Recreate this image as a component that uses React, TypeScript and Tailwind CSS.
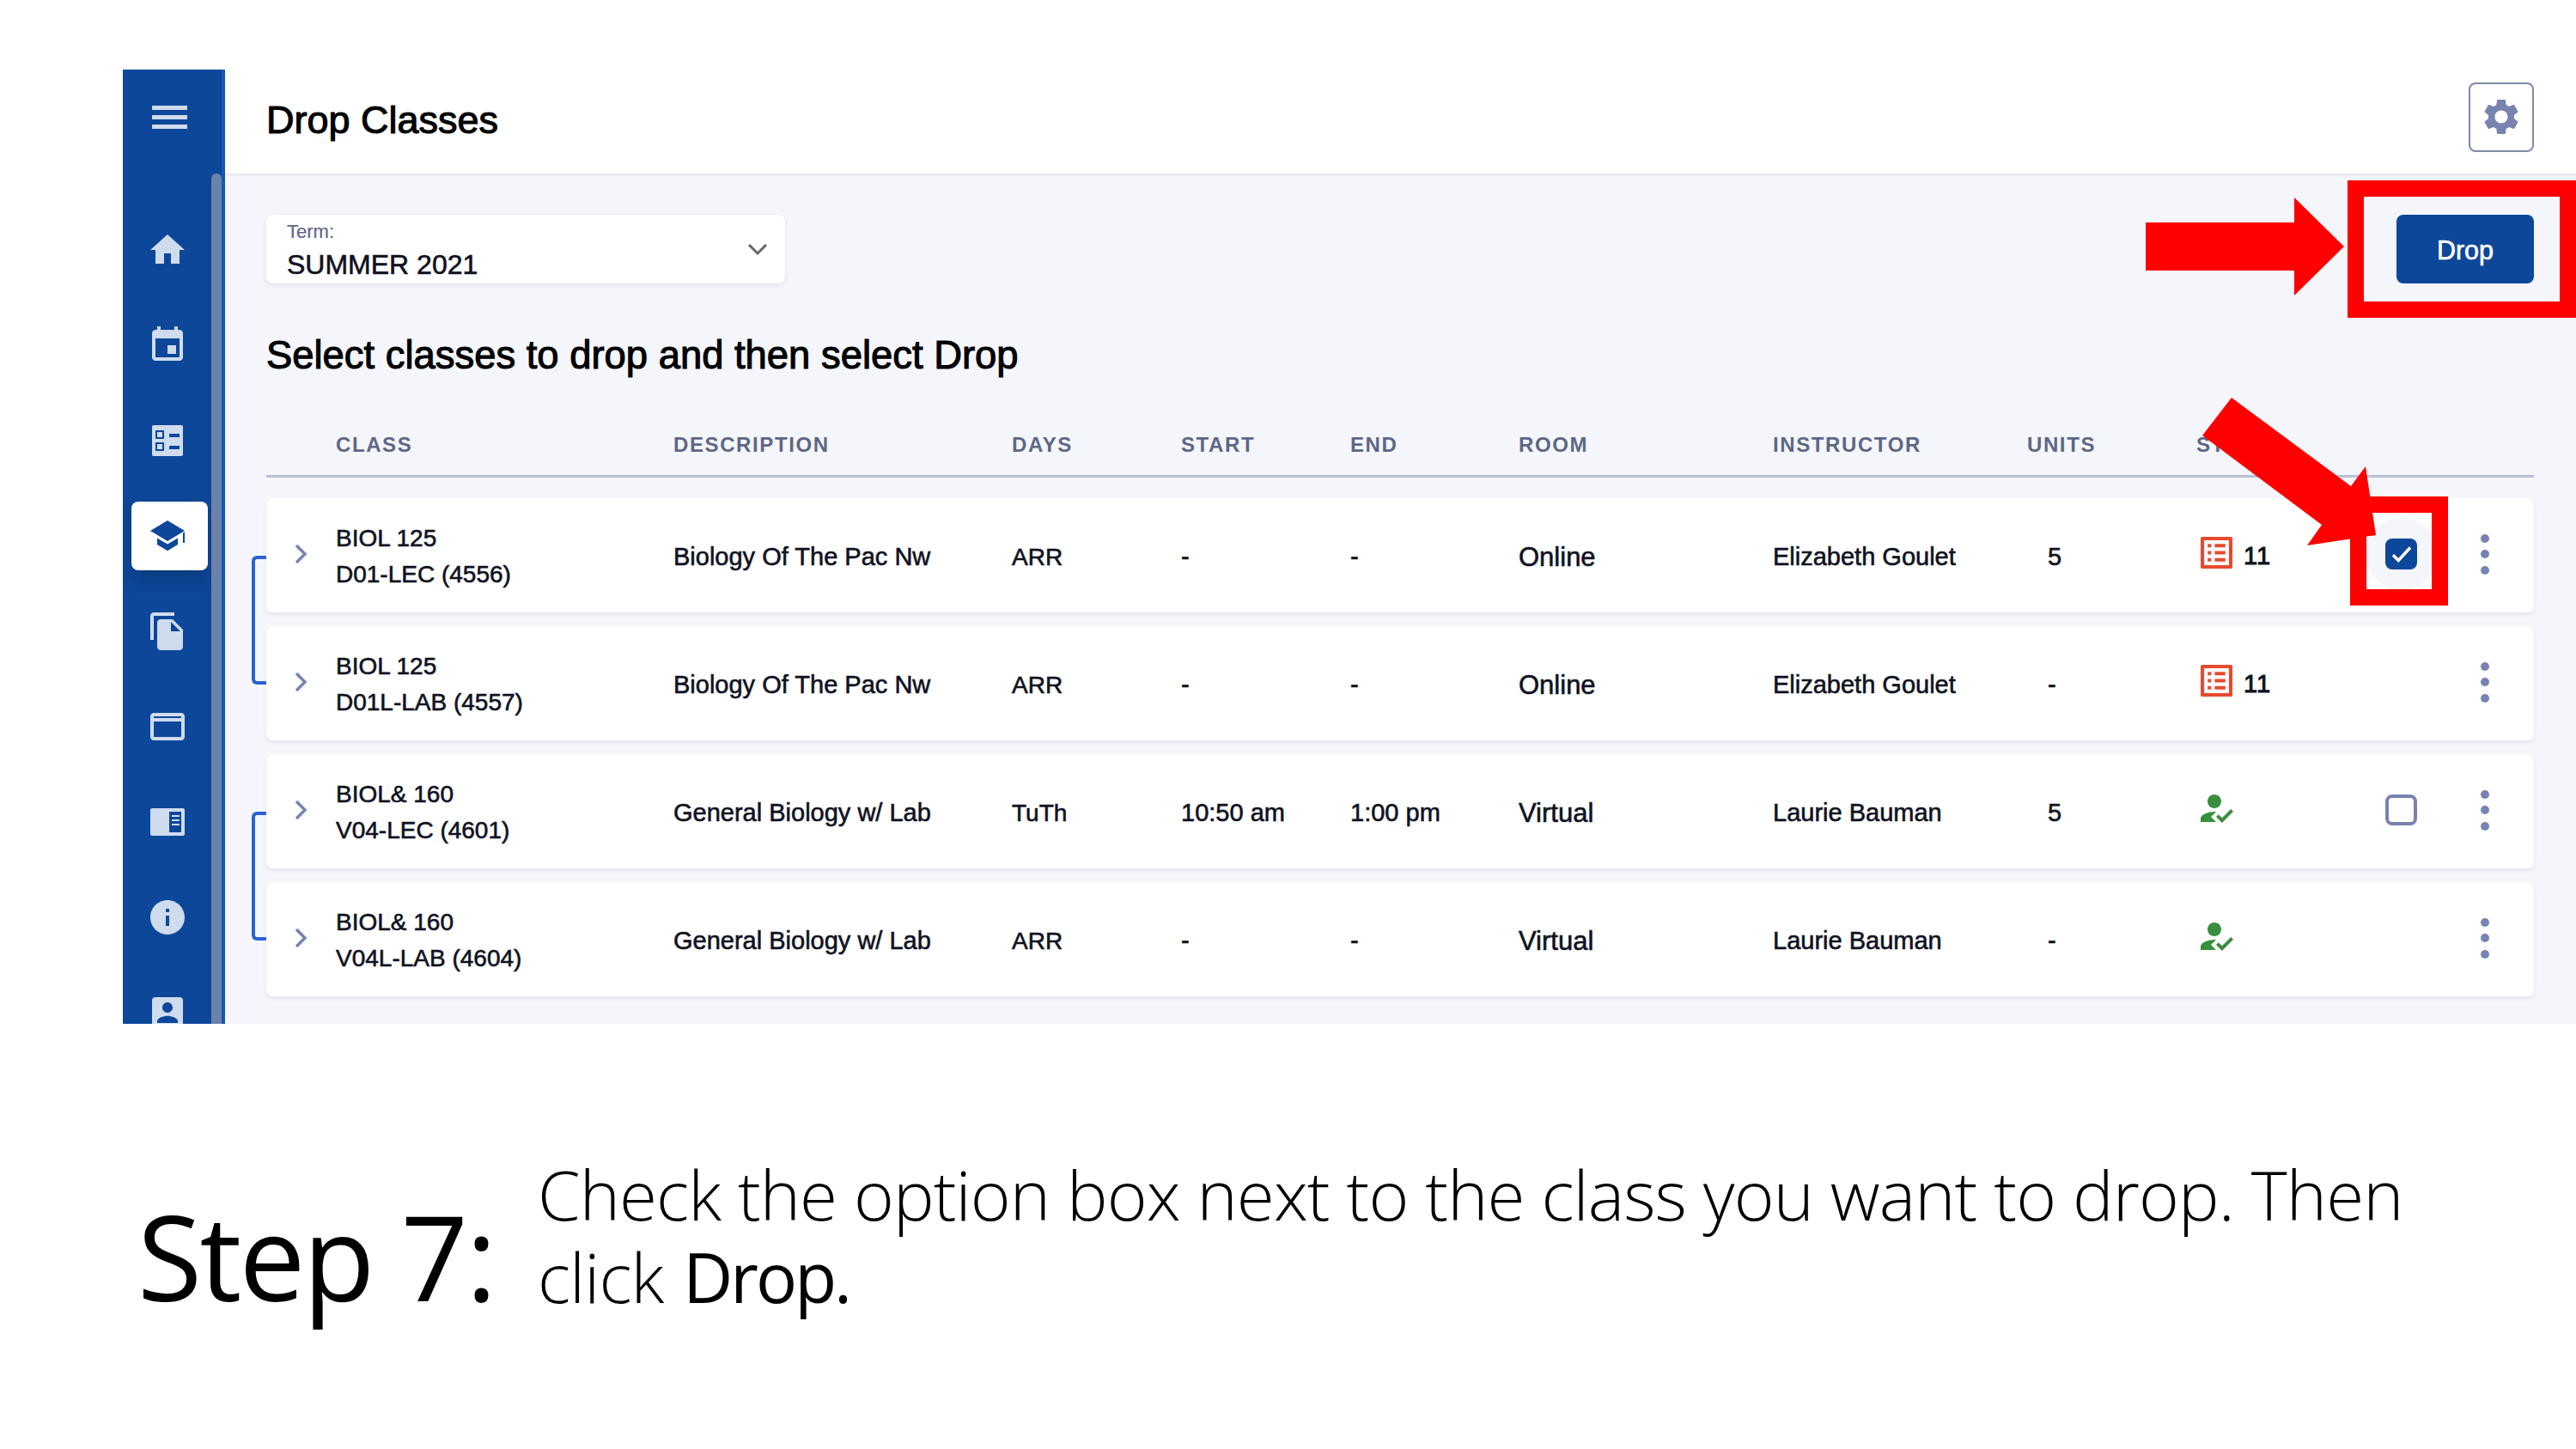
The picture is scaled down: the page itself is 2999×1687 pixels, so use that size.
import type { ReactNode } from 'react'

const NAV_ICONS: { key: string; active?: boolean; icon: ReactNode }[] = [
  { key: 'home', icon: <path d="M10 20v-6h4v6h5v-8h3L12 3 2 12h3v8z" /> },
  {
    key: 'calendar',
    icon: <path d="M17 12h-5v5h5v-5zM16 1v2H8V1H6v2H5c-1.11 0-1.99.9-1.99 2L3 19c0 1.1.89 2 2 2h14c1.1 0 2-.9 2-2V5c0-1.1-.9-2-2-2h-1V1h-2zm3 18H5V8h14v11z" />,
  },
  {
    key: 'checklist',
    icon: (
      <path
        fillRule="evenodd"
        d="M4 3h16a1 1 0 0 1 1 1v16a1 1 0 0 1-1 1H4a1 1 0 0 1-1-1V4a1 1 0 0 1 1-1zm1 3v5h5V6H5zm1 1h3v3H6V7zm7 1v2h6V8h-6zM5 13v5h5v-5H5zm1 1h3v3H6v-3zm7 1v2h6v-2h-6z"
      />
    ),
  },
  {
    key: 'classes',
    active: true,
    icon: <path d="M12 3 2 9l10 6 10-6zM6 13.200V17l6 3.600 6-3.600v-3.800l-6 3.600zM21 10.300V16h1v-6.300z" />,
  },
  {
    key: 'files',
    icon: <path d="M16 1H4c-1.1 0-2 .9-2 2v14h2V3h12V1zm-1 4 6 6v10c0 1.1-.9 2-2 2H7.99C6.89 23 6 22.1 6 21l.01-14c0-1.1.89-2 1.99-2h7zm-1 7h5.5L14 6.5V12z" />,
  },
  {
    key: 'card',
    icon: <path d="M20 4H4c-1.11 0-1.99.89-1.99 2L2 18c0 1.11.89 2 2 2h16c1.11 0 2-.89 2-2V6c0-1.11-.89-2-2-2zm0 14H4v-9h16v9zm0-11H4V6h16v1z" />,
  },
  {
    key: 'book',
    icon: (
      <path
        fillRule="evenodd"
        d="M2 5a1 1 0 0 1 1-1h18a1 1 0 0 1 1 1v14a1 1 0 0 1-1 1H3a1 1 0 0 1-1-1V5zm11 1v12h7V6h-7zm1.5 2H19v1h-4.500V8zm0 2.500H19v1h-4.500v-1zm0 2.500H19v1h-4.500v-1z"
      />
    ),
  },
  {
    key: 'info',
    icon: <path d="M12 2C6.480 2 2 6.480 2 12s4.480 10 10 10 10-4.480 10-10S17.520 2 12 2zm1 15h-2v-6h2v6zm0-8h-2V7h2v2z" />,
  },
  {
    key: 'account',
    icon: <path d="M3 5v14a2 2 0 0 0 2 2h14a2 2 0 0 0 2-2V5a2 2 0 0 0-2-2H5a2 2 0 0 0-2 2zm12 4c0 1.660-1.340 3-3 3s-3-1.340-3-3 1.340-3 3-3 3 1.340 3 3zm-9 8c0-2 4-3.100 6-3.100s6 1.100 6 3.100v1H6v-1z" />,
  },
]

const COLUMNS = ['Class', 'Description', 'Days', 'Start', 'End', 'Room', 'Instructor', 'Units', 'St']

const GRID =
  'grid grid-cols-[81px_393px_394px_197px_197px_196px_296px_296px_197px_220px_37px_136px] items-center'

type Row = {
  code: string
  section: string
  description: string
  days: string
  start: string
  end: string
  room: string
  instructor: string
  units: string
  status: 'waitlist' | 'enrolled'
  checkbox: 'checked' | 'empty' | null
}

const GROUPS: Row[][] = [
  [
    {
      code: 'BIOL 125',
      section: 'D01-LEC (4556)',
      description: 'Biology Of The Pac Nw',
      days: 'ARR',
      start: '-',
      end: '-',
      room: 'Online',
      instructor: 'Elizabeth Goulet',
      units: '5',
      status: 'waitlist',
      checkbox: 'checked',
    },
    {
      code: 'BIOL 125',
      section: 'D01L-LAB (4557)',
      description: 'Biology Of The Pac Nw',
      days: 'ARR',
      start: '-',
      end: '-',
      room: 'Online',
      instructor: 'Elizabeth Goulet',
      units: '-',
      status: 'waitlist',
      checkbox: null,
    },
  ],
  [
    {
      code: 'BIOL& 160',
      section: 'V04-LEC (4601)',
      description: 'General Biology w/ Lab',
      days: 'TuTh',
      start: '10:50 am',
      end: '1:00 pm',
      room: 'Virtual',
      instructor: 'Laurie Bauman',
      units: '5',
      status: 'enrolled',
      checkbox: 'empty',
    },
    {
      code: 'BIOL& 160',
      section: 'V04L-LAB (4604)',
      description: 'General Biology w/ Lab',
      days: 'ARR',
      start: '-',
      end: '-',
      room: 'Virtual',
      instructor: 'Laurie Bauman',
      units: '-',
      status: 'enrolled',
      checkbox: null,
    },
  ],
]

function Status({ kind }: { kind: Row['status'] }) {
  if (kind === 'waitlist') {
    return (
      <div className="flex items-center gap-[13px]">
        <svg viewBox="3 3 18 18" className="w-[37px] h-[37px] fill-[#e64a2e] ml-[5px] -mt-[6px]">
          <path d="M19 5v14H5V5h14m1.100-2H3.900c-.5 0-.9.4-.9.9v16.200c0 .4.4.9.9.9h16.200c.4 0 .9-.5.9-.9V3.900c0-.5-.5-.9-.9-.9zM11 7h6v2h-6V7zm0 4h6v2h-6v-2zm0 4h6v2h-6zM7 7h2v2H7zm0 4h2v2H7zm0 4h2v2H7z" />
        </svg>
        <span className="tracking-[1px] pt-[3px] [-webkit-text-stroke-width:1px]">11</span>
      </div>
    )
  }
  return (
    <svg viewBox="3 4 19 17" className="w-[38px] h-[34px] fill-[#388e3c] ml-[5px] -mt-[6px]">
      <path d="M9 17l3-2.940c-.39-.04-.68-.06-1-.06-2.670 0-8 1.340-8 4v2h9l-3-3zm2-5c2.210 0 4-1.790 4-4s-1.790-4-4-4-4 1.790-4 4 1.790 4 4 4m4.470 8.500L12 17l1.400-1.410 2.070 2.080 5.130-5.170 1.400 1.410z" />
    </svg>
  )
}

function ClassRow({ row }: { row: Row }) {
  return (
    <div className={`${GRID} h-[133px] bg-white rounded-lg shadow-[0_3px_5px_rgba(70,80,120,0.08)]`}>
      <div className="pl-[33px] -mt-[3px]">
        <svg viewBox="0 0 15 24" className="w-[15px] h-[24px] fill-none stroke-[#7883b0] stroke-[3.500]">
          <path d="M2 2l10 10L2 22" />
        </svg>
      </div>
      <div className="pt-[2px] leading-[42px] text-[28px]">
        <div>{row.code}</div>
        <div>{row.section}</div>
      </div>
      <div className="pt-[5px]">{row.description}</div>
      <div className="pt-[5px] text-[28px]">{row.days}</div>
      <div className="pt-[5px]">{row.start}</div>
      <div className="pt-[5px]">{row.end}</div>
      <div className="pt-[5px] text-[31px]">{row.room}</div>
      <div className="pt-[5px]">{row.instructor}</div>
      <div className="pt-[5px] pl-[24px]">{row.units}</div>
      <Status kind={row.status} />
      <div className="relative h-[36px] -mt-[3px]">
        {row.checkbox === 'checked' && (
          <>
            <div className="absolute -left-[23px] -top-[24px] w-[84px] h-[84px] rounded-full bg-[#f4f6fb]" />
            <div className="absolute inset-0 rounded-lg bg-[#0d4799] flex items-center justify-center">
              <svg viewBox="0 0 24 24" className="w-[30px] h-[30px] fill-none stroke-white stroke-[2.800]">
                <path d="M4 13l5 5L20 6" />
              </svg>
            </div>
          </>
        )}
        {row.checkbox === 'empty' && (
          <div className="absolute inset-0 rounded-lg border-[4px] border-[#7883b0]" />
        )}
      </div>
      <div className="flex flex-col items-center gap-[8.500px] w-[10px] ml-[74px] -mt-[3px]">
        <div className="w-[10px] h-[10px] rounded-full bg-[#7883b0]" />
        <div className="w-[10px] h-[10px] rounded-full bg-[#7883b0]" />
        <div className="w-[10px] h-[10px] rounded-full bg-[#7883b0]" />
      </div>
    </div>
  )
}

export default function App() {
  return (
    <div className="relative w-[2999px] h-[1687px] overflow-hidden bg-white text-[#0f1222] font-['Liberation_Sans',sans-serif]">
      <div className="pt-[81px] pl-[143px]">
        <div className="flex h-[1111px] overflow-hidden">
          <aside className="flex w-[119px] shrink-0 bg-[#0d4799]">
            <div className="w-[103px] shrink-0">
              <div className="h-[109px] flex items-center justify-center pt-[1px] pl-[5px]">
                <div className="flex flex-col gap-[6px]">
                  <div className="w-[41px] h-[5px] bg-[#cfdcee]" />
                  <div className="w-[41px] h-[5px] bg-[#cfdcee]" />
                  <div className="w-[41px] h-[5px] bg-[#cfdcee]" />
                </div>
              </div>
              <nav className="flex flex-col gap-[31px] pt-[61px]">
                {NAV_ICONS.map((item) => (
                  <div
                    key={item.key}
                    className={`h-[80px] w-[89px] ml-[10px] shrink-0 rounded-lg flex items-center justify-center pr-[5px] ${
                      item.active ? 'bg-white shadow-[0_10px_20px_rgba(0,0,0,0.18)]' : ''
                    }`}
                  >
                    <svg
                      viewBox="0 0 24 24"
                      className={`w-[48px] h-[48px] ${item.active ? 'fill-[#0d4799]' : 'fill-[#cfdcee]'}`}
                    >
                      {item.icon}
                    </svg>
                  </div>
                ))}
              </nav>
            </div>
            <div className="w-[12px] mt-[121px] rounded-t-lg bg-[#6b82ab]" />
            <div className="w-[4px] bg-[#1558b8]" />
          </aside>

          <main className="flex-1 flex flex-col bg-[#f4f6fb]">
            <header className="h-[121px] shrink-0 bg-white flex items-center justify-between pl-[48px] pr-[49px] shadow-[0_1px_4px_rgba(70,80,120,0.15)]">
              <h1 className="text-[45px] text-black [-webkit-text-stroke-width:1.100px] -mt-[4px]">Drop Classes</h1>
              <div className="w-[76px] h-[81px] -mt-[11px] rounded-lg border-[2px] border-[#7d8aa8] flex items-center justify-center">
                <svg viewBox="0 0 24 24" className="w-[50px] h-[50px] fill-[#7883b0]">
                  <path d="M19.140 12.940c.04-.3.06-.61.06-.94 0-.32-.02-.64-.07-.94l2.030-1.580a.49.49 0 0 0 .12-.61l-1.920-3.320a.488.488 0 0 0-.59-.22l-2.390.96c-.5-.38-1.030-.7-1.620-.94l-.36-2.540a.484.484 0 0 0-.48-.41h-3.840c-.24 0-.43.17-.47.41l-.36 2.540c-.59.24-1.130.57-1.620.94l-2.390-.96c-.22-.08-.47 0-.59.22L2.740 8.870c-.12.21-.08.47.12.61l2.030 1.580c-.05.3-.09.63-.09.94s.02.64.07.94l-2.030 1.580a.49.49 0 0 0-.12.61l1.920 3.320c.12.22.37.29.59.22l2.390-.96c.5.38 1.030.7 1.620.94l.36 2.540c.05.24.24.41.48.41h3.840c.24 0 .44-.17.47-.41l.36-2.540c.59-.24 1.130-.56 1.620-.94l2.390.96c.22.08.47 0 .59-.22l1.920-3.320c.12-.22.07-.47-.12-.61l-2.010-1.580zM12 15.600c-1.980 0-3.600-1.620-3.600-3.600s1.620-3.600 3.600-3.600 3.600 1.620 3.600 3.600-1.620 3.600-3.600 3.600z" />
                </svg>
              </div>
            </header>

            <div className="flex-1 pt-[48px] pl-[48px] pr-[49px] text-[29px] [-webkit-text-stroke-width:0.6px]">
              <div className="flex items-start justify-between">
                <div className="w-[604px] h-[80px] bg-white rounded-lg shadow-[0_2px_5px_rgba(70,80,120,0.12)] flex items-center justify-between pl-[24px] pr-[20px]">
                  <div className="pt-[8px]">
                    <div className="text-[22px] leading-[24px] text-[#5d6786] [-webkit-text-stroke-width:0.2px]">Term:</div>
                    <div className="mt-[4px] text-[32px] leading-[44px]">SUMMER 2021</div>
                  </div>
                  <svg viewBox="0 0 24 16" className="w-[24px] h-[16px] fill-none stroke-[#666] stroke-[3]">
                    <path d="M2 3l10 10L22 3" />
                  </svg>
                </div>
                <button className="w-[160px] h-[80px] rounded-lg bg-[#0d4799] text-white text-[30.500px] pt-[4px]">Drop</button>
              </div>

              <h2 className="mt-[60px] text-[45.400px] leading-[48px] text-black [-webkit-text-stroke-width:1.100px]">
                Select classes to drop and then select Drop
              </h2>

              <div className={`${GRID} mt-[62px] h-[56px] pb-[21px] border-b-[3px] border-[#b9c0d6]`}>
                <div />
                {COLUMNS.map((c) => (
                  <div key={c} className="text-[24px] font-bold uppercase tracking-[1.600px] text-[#5d6786] [-webkit-text-stroke-width:0px]">
                    {c}
                  </div>
                ))}
              </div>

              <div className="mt-[24px] flex flex-col gap-[16px]">
                {GROUPS.map((group) => (
                  <div key={group[0].section} className="relative flex flex-col gap-[16px]">
                    <div className="absolute -left-[17px] top-[67px] bottom-[65px] w-[17px] rounded-l-md border-l-[4px] border-y-[4px] border-[#2e62d0]" />
                    {group.map((row) => (
                      <ClassRow key={row.section} row={row} />
                    ))}
                  </div>
                ))}
              </div>
            </div>
          </main>
        </div>
      </div>

      <div className="flex items-center pl-[160px] pt-[198px] font-['Open_Sans',sans-serif] text-black">
        <div className="w-[466px] shrink-0 text-[137px] leading-none tracking-[-2.700px]">Step 7:</div>
        <div className="text-[80px] leading-[96px] font-light tracking-[-0.900px] -mt-[48px]">
          <div>Check the option box next to the class you want to drop. Then</div>
          <div>
            click <span className="ml-[3px] font-normal tracking-[-3px]">Drop.</span>
          </div>
        </div>
      </div>

      {/* red callouts drawn over the screenshot */}
      <div className="absolute left-[2733px] top-[210px] w-[266px] h-[160px] border-[19px] border-[#ff0000]" />
      <div className="absolute left-[2736px] top-[578px] w-[114px] h-[127px] border-[19px] border-[#ff0000]" />
      <svg viewBox="0 0 2999 1687" className="absolute inset-0 w-[2999px] h-[1687px] fill-[#ff0000]">
        <polygon points="2498,259 2671,259 2671,230 2729,287 2671,344 2671,315 2498,315" />
        <polygon points="2598,463 2737,566 2754,543 2766,623 2686,635 2703,611 2564,507" />
      </svg>
    </div>
  )
}
